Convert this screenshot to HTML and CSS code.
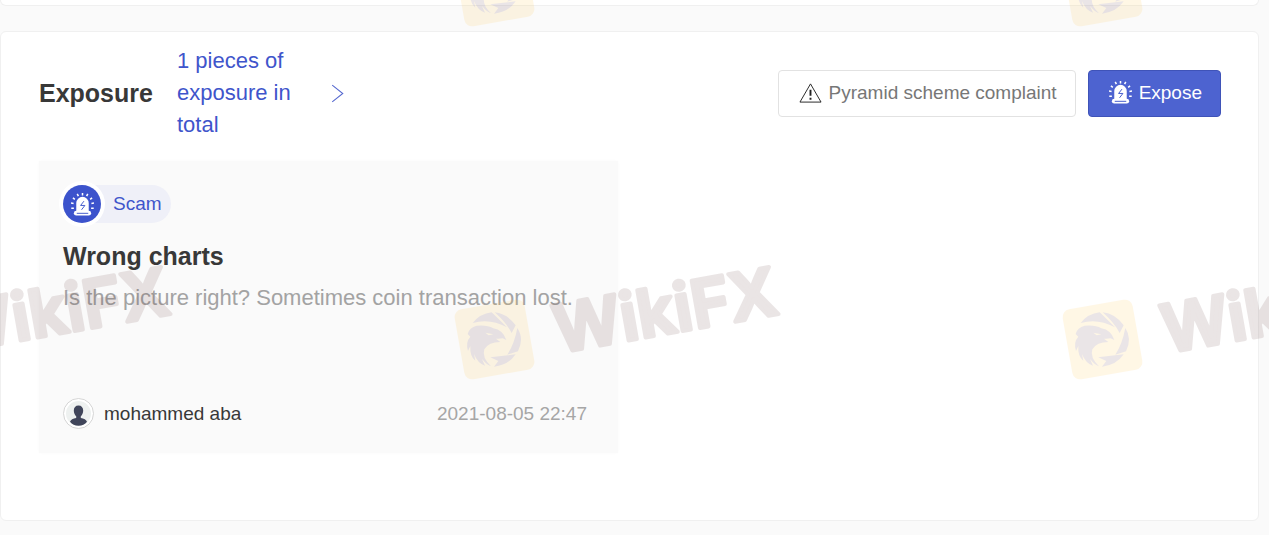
FILE: index.html
```
<!DOCTYPE html>
<html lang="en">
<head>
    <meta charset="UTF-8">
    <meta name="viewport" content="width=device-width, initial-scale=1.0">
    <title>Exposure</title>
    <link rel="stylesheet" href="styles.css">
</head>
<body>
    <!-- Shared icons -->
    <svg class="sprite" aria-hidden="true">
        <symbol id="siren" viewBox="0 0 24 24">
            <path d="M5.500 20V10.500a6.500 6.500 0 0 1 13 0V20z" fill="currentColor"/>
            <rect x="3" y="18.500" width="18" height="5" rx="2.500" fill="currentColor"/>
            <path d="M6 21.200h12" class="siren-cut"/>
            <path d="M13.500 8.500l-3.500 4.500h4.500l-3.500 4.500" class="siren-cut"/>
            <path d="M12 0v2.500M6.500 1l1.200 2.200M17.500 1l-1.200 2.200M2 5l2 1.600M22 5l-2 1.600M0 10.500l2.700.5M24 10.500l-2.700.5M.3 16h2.700M23.700 16h-2.700" stroke="currentColor" stroke-width="1.600" fill="none"/>
        </symbol>
        <symbol id="mark" viewBox="0 0 360 130" overflow="visible">
            <rect x="9" y="34" width="71" height="71" rx="8" transform="rotate(-10 44.500 69.500)" fill="#ffc440"/>
            <g transform="translate(-20 -20) scale(.3333)" fill="#653c4c">
                <path d="M128 219Q150 191 185 187L199 200L231 232Q180 204 128 219Z"/>
                <path d="M194 187Q232 191 257 226L245 249Q228 217 194 187Z"/>
                <path d="M262 234Q283 266 264 304L232 314Q253 282 262 234Z"/>
                <path d="M181 322L257 313Q236 345 192 350L205 333Z"/>
                <path d="M113 252Q118 232 140 227Q172 224 190 235Q219 240 229 270L218 265Q208 267 198 266L211 276Q176 276 163 298Q155 322 183 349Q171 345 156 327L165 347Q143 340 132 312L136 332Q119 319 121 288L114 303Q106 276 121 260Z"/>
                <path d="M166 248l24 5-14 3z" fill="#ffc440"/>
            </g>
            <text x="108" y="83" transform="rotate(-10 108 83)" class="mark-text">WikiFX</text>
        </symbol>
    </svg>

    <section class="panel panel-previous"></section>

    <!-- Exposure section -->
    <section class="panel">
        <header class="panel-header">
            <h2 class="title">Exposure</h2>
            <a class="total" href="#">
                <span class="total-text">1 pieces of exposure in total</span>
                <svg class="arrow" viewBox="0 0 12 18" aria-hidden="true"><path d="M1 1l10 8-10 8"/></svg>
            </a>
            <div class="actions">
                <button class="btn" type="button">
                    <svg class="btn-icon warning" viewBox="0 0 24 24" aria-hidden="true">
                        <path d="M12 3L23 22H1z"/>
                        <path d="M12 9v6.500M12 17.500v2" class="warning-mark"/>
                    </svg>
                    Pyramid scheme complaint
                </button>
                <button class="btn btn-primary" type="button">
                    <svg class="btn-icon" aria-hidden="true"><use href="#siren"/></svg>
                    Expose
                </button>
            </div>
        </header>

        <div class="cards">
            <article class="card">
                <div class="tag">
                    <span class="tag-icon"><svg aria-hidden="true"><use href="#siren"/></svg></span>
                    Scam
                </div>
                <h3 class="card-title">Wrong charts</h3>
                <p class="card-text">Is the picture right? Sometimes coin transaction lost.</p>
                <footer class="card-footer">
                    <svg class="avatar" viewBox="0 0 31 31" aria-hidden="true">
                        <circle cx="15.500" cy="15.500" r="15" fill="#fff" stroke="#d5d5d5"/>
                        <circle cx="15.500" cy="15.500" r="12.500" fill="#eef1f0"/>
                        <path d="M15.500 7.500c3 0 4.700 2 4.700 5 0 2.500-1 4.500-2.400 5.700v1.800c3 .8 5.700 1.600 6.200 3.800-2 2.500-5 3.900-8.500 3.900s-6.500-1.400-8.500-3.900c.5-2.200 3.200-3 6.200-3.800v-1.800c-1.400-1.200-2.400-3.200-2.400-5.700 0-3 1.700-5 4.700-5z" fill="#40455a"/>
                    </svg>
                    <span class="author">mohammed aba</span>
                    <time datetime="2021-08-05T22:47">2021-08-05 22:47</time>
                </footer>
            </article>
        </div>
    </section>

    <!-- Watermark over the whole page -->
    <svg class="watermark" aria-hidden="true">
        <use href="#mark" x="-158" y="-83" width="360" height="130"/>
        <use href="#mark" x="450" y="-83" width="360" height="130"/>
        <use href="#mark" x="1058" y="-83" width="360" height="130"/>
        <use href="#mark" x="-158" y="270" width="360" height="130"/>
        <use href="#mark" x="450" y="270" width="360" height="130"/>
        <use href="#mark" x="1058" y="270" width="360" height="130"/>
    </svg>
</body>
</html>
```
FILE: styles.css
```
* {
    box-sizing: border-box;
}

body {
    position: relative;
    margin: 0;
    min-height: 100vh;
    padding-right: 10px;
    background-color: #fafafa;
    color: #383838;
    font-family: "Liberation Sans", Arial, sans-serif;
    font-size: 19px;
    overflow-x: hidden;
}

.sprite {
    display: block;
    width: 0;
    height: 0;
}

/* Panels */
.panel {
    padding: 13px 37px 67px 38px;
    background-color: #fff;
    border: 1px solid #f0f0f0;
    border-radius: 6px;
}

.panel-previous {
    padding: 5px 0 0;
    margin-bottom: 25px;
    border-top: none;
    border-radius: 0 0 6px 6px;
}

.panel-header {
    display: flex;
    align-items: center;
    margin-bottom: 20px;
}

.title {
    margin: 0 24px 0 0;
    font-size: 25px;
}

.total {
    display: flex;
    align-items: center;
    gap: 12px;
    color: #3f55cb;
    font-size: 22px;
    line-height: 32px;
    text-decoration: none;
}

.total-text {
    width: 142px;
}

.arrow {
    width: 13px;
    height: 19px;
    fill: none;
    stroke: #5568cf;
}

/* Buttons */
.actions {
    display: flex;
    gap: 12px;
    margin-left: auto;
}

.btn {
    display: flex;
    align-items: center;
    gap: 7px;
    height: 47px;
    padding: 0 18px 1px 20px;
    background-color: #fff;
    border: 1px solid #e2e2e2;
    border-radius: 4px;
    color: #777;
    font-family: inherit;
    font-size: 19px;
    cursor: pointer;
}

.btn-primary {
    background-color: #4d63d0;
    border-color: #3f53b8;
    color: #fff;
}

.btn-icon {
    width: 23px;
    height: 23px;
}

.warning {
    fill: none;
    stroke: #222;
}

.warning-mark {
    stroke-width: 2;
}

.siren-cut {
    fill: none;
    stroke: #4058cb;
    stroke-width: 1;
}

/* Exposure cards */
.cards {
    display: grid;
    grid-template-columns: 1fr 1fr;
    gap: 24px;
}

.card {
    padding: 24px 31px 24px 24px;
    background-color: #fafafa;
    box-shadow: 0 0 3px #fafafa;
}

.tag {
    display: inline-flex;
    align-items: center;
    gap: 12px;
    height: 38px;
    padding-right: 9px;
    background-color: #eff0f8;
    border-radius: 19px;
    color: #3f55cb;
}

.tag-icon {
    display: flex;
    align-items: center;
    justify-content: center;
    width: 38px;
    height: 38px;
    background-color: #3c53cc;
    border-radius: 50%;
    box-shadow: 0 0 0 4px #fff;
    color: #fff;
}

.tag-icon svg {
    width: 23px;
    height: 23px;
}

.card-title {
    margin: 17px 0 0;
    font-size: 25px;
    line-height: 32px;
}

.card-text {
    min-height: 102px;
    margin: 10px 0 0;
    color: #a3a3a3;
    font-size: 22px;
    line-height: 32px;
}

.card-footer {
    display: flex;
    align-items: center;
    gap: 10px;
    height: 31px;
    margin-top: 14px;
}

.avatar {
    width: 31px;
    height: 31px;
}

.card-footer time {
    margin-left: auto;
    color: #a6a6a6;
}

/* Watermark */
.watermark {
    position: absolute;
    top: 0;
    left: 0;
    width: 100%;
    height: 100%;
    opacity: 0.13;
    overflow: hidden;
    pointer-events: none;
}

.mark-text {
    fill: #653c3c;
    stroke: #653c3c;
    stroke-width: 4;
    stroke-linejoin: round;
    font-family: Inter, sans-serif;
    font-size: 66px;
    font-weight: 600;
}
```
